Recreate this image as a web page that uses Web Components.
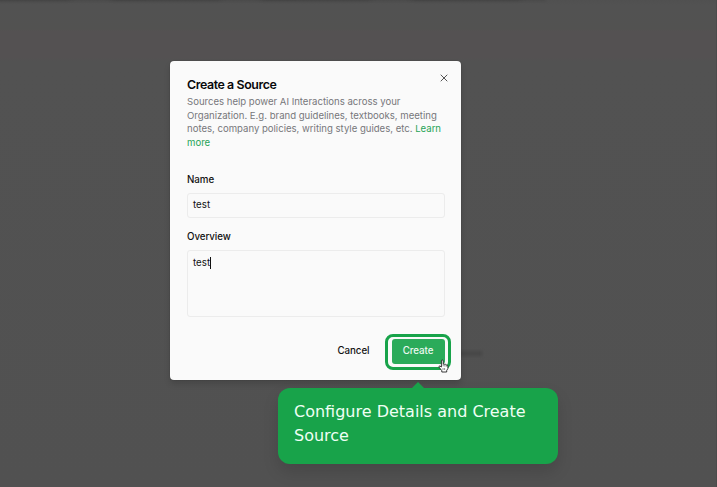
<!DOCTYPE html>
<html lang="en">
<head>
<meta charset="utf-8">
<title>Create a Source</title>
<style>
html, body { margin: 0; width: 717px; height: 487px; overflow: hidden; }
body { font-family: Inter, "Liberation Sans", sans-serif; font-size: 9.75px; color: #111; }
source-dialog > div { white-space: nowrap; font-size: 9.6px; letter-spacing: -.015px; }
a { color: #27a457; }
</style>
</head>
<body>
<app-backdrop>
  <source-dialog heading="Create a Source">
    <div slot="description">Sources help power AI Interactions across your</div>
    <div slot="description">Organization. E.g. brand guidelines, textbooks, meeting</div>
    <div slot="description">notes, company policies, writing style guides, etc. <a>Learn</a></div>
    <div slot="description"><a>more</a></div>
    <text-field label="Name" value="test"></text-field>
    <text-field label="Overview" value="test" multiline></text-field>
    <dialog-button slot="actions">Cancel</dialog-button>
    <dialog-button slot="actions" primary>Create</dialog-button>
  </source-dialog>
  <guide-tooltip>Configure Details and Create Source</guide-tooltip>
  <hand-cursor></hand-cursor>
</app-backdrop>
<script>
class ShadowElement extends HTMLElement {
  connectedCallback() {
    if (!this.shadowRoot) this.attachShadow({ mode: "open" }).innerHTML = this.markup();
  }
}

customElements.define("app-backdrop", class extends ShadowElement {
  markup() { return `<style>
    :host { display: block; position: relative; width: 717px; height: 487px; overflow: hidden;
      background: linear-gradient(#505050 0, #525252 5px, #525251 29px, #545152 31px, #545152 58px, #525252 61px, #525252 66px, #515151 100%); }
    .top, .side { position: absolute; filter: blur(1.6px); }
    .top { left: -4px; top: -3px; width: 550px; height: 4px; background: repeating-linear-gradient(90deg, #414141 0 70px, #494949 80px 110px, #404040 120px 150px); }
    .side { left: 455px; top: 351px; width: 27px; height: 5px; background: #474747; }
    .edge { position: absolute; right: 0; top: 0; width: 1px; height: 487px; background: #4b4b4b; }
  </style><div class="top"></div><div class="side"></div><div class="edge"></div><slot></slot>`; }
});

customElements.define("source-dialog", class extends ShadowElement {
  markup() { return `<style>
    :host { position: absolute; left: 170px; top: 61px; width: 291px; height: 319px; box-sizing: border-box;
      padding: 15px 16.5px 16px 17px; display: flex; flex-direction: column; background: #fafafa; border-radius: 4px;
      box-shadow: 0 4px 6px rgba(0,0,0,.14), 0 0 1px rgba(0,0,0,.4); }
    h2 { margin: 0; font-size: 12.4px; line-height: 17px; font-weight: 600; letter-spacing: -.42px; color: #09090b; }
    .description { margin-top: 1.75px; line-height: 13.75px; color: #77777b; }
    .fields { margin-top: 23.25px; display: flex; flex-direction: column; gap: 12px; }
    .actions { margin-top: auto; display: flex; justify-content: flex-end; align-items: center; }
    svg { position: absolute; right: 12px; top: 12px; width: 10px; height: 10px; }
  </style>
  <h2>${this.getAttribute("heading")}</h2>
  <div class="description"><slot name="description"></slot></div>
  <div class="fields"><slot></slot></div>
  <div class="actions"><slot name="actions"></slot></div>
  <svg viewBox="0 0 10 10"><path d="M2 2L8 8M8 2L2 8" stroke="#555" stroke-width="1" stroke-linecap="round"/></svg>`; }
});

customElements.define("text-field", class extends ShadowElement {
  markup() {
    const multi = this.hasAttribute("multiline");
    return `<style>
    :host { display: block; }
    .label { font-weight: 500; line-height: 14px; letter-spacing: -.06px; color: #111; }
    .box { box-sizing: border-box; margin-top: 6px; height: ${multi ? 67 : 25}px; padding: ${multi ? 5 : 4}px 5px; line-height: 14px;
      border: 1px solid #ececec; border-radius: 3px; background: #fafafa; display: flex; }
    i { width: 1px; height: 12px; margin-top: 1px; background: #111; }
  </style><div class="label">${this.getAttribute("label")}</div>
  <div class="box"><span>${this.getAttribute("value")}</span>${multi ? "<i></i>" : ""}</div>`; }
});

customElements.define("dialog-button", class extends ShadowElement {
  markup() { return `<style>
    :host { display: grid; place-items: center; position: relative; height: 26px; padding: 0 11px; line-height: 14px; font-weight: 500; letter-spacing: -.06px; color: #111; }
    :host([primary]) { height: 25px; width: 53px; padding: 0; margin-left: 11px; background: #2bab5a; color: #edf9f1; border-radius: 3px; }
    .ring { display: none; position: absolute; inset: -5px -6.5px -6px -7px; border: 3px solid #18a34a; border-radius: 8px; box-sizing: border-box; }
    :host([primary]) .ring { display: block; }
  </style><span><slot></slot></span><div class="ring"></div>`; }
});

customElements.define("guide-tooltip", class extends ShadowElement {
  markup() { return `<style>
    :host { position: absolute; left: 278px; top: 388px; width: 280px; height: 76px; box-sizing: border-box; padding: 12px 16px;
      border-radius: 12px; background: #18a34a; color: #effff4; font: 16px/24px "DejaVu Sans", sans-serif;
      box-shadow: 0 8px 16px rgba(0,0,0,.13); }
    .arrow { position: absolute; left: 134px; top: -6px; width: 12px; height: 6px; background: #18a34a; clip-path: polygon(50% 0, 100% 100%, 0 100%); }
  </style><div class="arrow"></div><slot></slot>`; }
});

customElements.define("hand-cursor", class extends ShadowElement {
  markup() { return `<style>
    :host { position: absolute; left: 438px; top: 359px; width: 11px; height: 14px; }
    svg { display: block; }
  </style><svg width="11" height="14" viewBox="0 0 11 14"><path d="M3.4 8V2Q3.4 1 4.3 1T5.2 2V5Q6 4.5 6.7 5.4Q7.5 5 8.2 5.9Q9.8 5.7 9.9 7V9.5L8.7 11.5V13H3.8V11.7L1 8.1Q.7 7 1.8 7Z" fill="#fff" stroke="#222" stroke-width=".9" stroke-linejoin="round"/><path d="M5.2 5V7.3M6.8 5.8V7.5M8.3 6.2V7.7M5 9v2M6.6 9v2" stroke="#333" stroke-width=".55"/></svg>`; }
});
</script>
</body>
</html>
